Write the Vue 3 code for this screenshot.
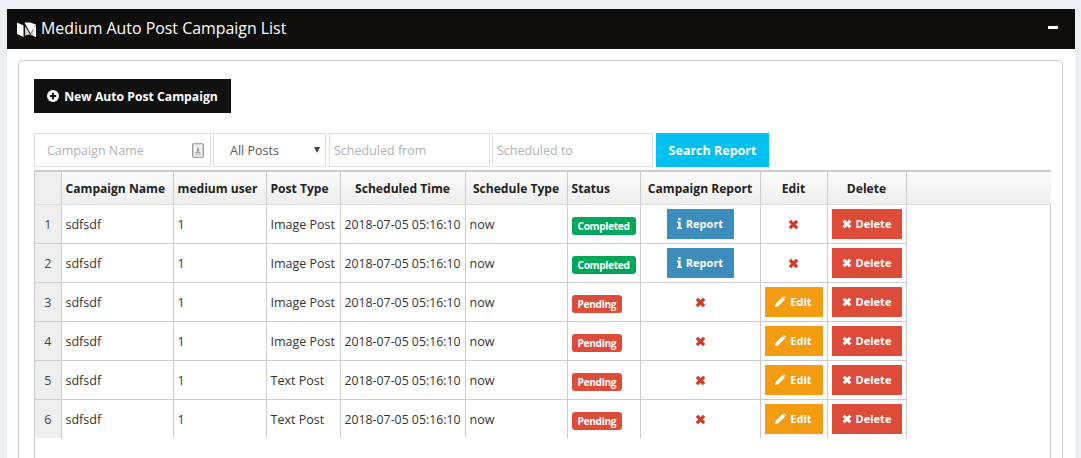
<template>
  <div class="page">
    <div class="box">
      <header class="box-head">
        <h1 class="box-title">
          <svg class="logo" viewBox="0 0 19 15" width="19" height="15">
            <path d="M0 0.5 6.5 3.5V15L0 12z" fill="#fff" />
            <path d="M7.5 0.5H13L19 2.5 13.5 11.5z" fill="#fff" />
            <path d="M8 4 13.2 12.6 19 3.6V15L13 12.4 8 13.4z" fill="#c9c9c9" />
            <path d="M16.5 6.5 19 3.6V15L16.5 13.8z" fill="#fff" />
          </svg>
          Medium Auto Post Campaign List
        </h1>
        <span class="collapse"></span>
      </header>
      <div class="box-body">
        <div class="panel">
          <button class="btn btn-new">
            <svg viewBox="0 0 12 12" width="12" height="12">
              <circle cx="6" cy="6" r="6" fill="#fff" />
              <path d="M6 2.8v6.4M2.8 6h6.4" stroke="#111" stroke-width="2" />
            </svg>
            New Auto Post Campaign
          </button>
          <div class="filters">
            <div class="field field-name">
              <span class="placeholder">Campaign Name</span>
              <svg class="contact" viewBox="0 0 12 15" width="12" height="15">
                <rect x="0.75" y="0.75" width="10.5" height="13.5" rx="1" fill="#f4f4f4" stroke="#8d8d8d" stroke-width="1.2" />
                <path d="M6 3 7.4 8.4H4.6z" fill="#8d8d8d" />
                <rect x="3.4" y="8.8" width="5.2" height="1.6" fill="#a5a5a5" />
                <rect x="3" y="11.2" width="6" height="1" fill="#bbb" />
              </svg>
            </div>
            <div class="field field-select">
              <span>All Posts</span>
              <i class="caret"></i>
            </div>
            <div class="field field-date"><span class="placeholder">Scheduled from</span></div>
            <div class="field field-date"><span class="placeholder">Scheduled to</span></div>
            <button class="btn btn-search">Search Report</button>
          </div>
          <div class="grid">
            <table>
              <colgroup>
                <col v-for="w in widths" :key="w.id" :style="{ width: w.px + 'px' }" />
              </colgroup>
              <thead>
                <tr>
                  <th class="idx"></th>
                  <th>Campaign Name</th>
                  <th>medium user</th>
                  <th>Post Type</th>
                  <th class="center">Scheduled Time</th>
                  <th class="center">Schedule Type</th>
                  <th>Status</th>
                  <th class="center">Campaign Report</th>
                  <th class="center">Edit</th>
                  <th class="center">Delete</th>
                  <th></th>
                </tr>
              </thead>
              <tbody>
                <tr v-for="(row, i) in rows" :key="i">
                  <td class="idx">{{ i + 1 }}</td>
                  <td>sdfsdf</td>
                  <td>1</td>
                  <td>{{ row.type }}</td>
                  <td class="time">2018-07-05 05:16:10</td>
                  <td>now</td>
                  <td>
                    <span class="label" :class="row.done ? 'label-green' : 'label-red'">
                      {{ row.done ? 'Completed' : 'Pending' }}
                    </span>
                  </td>
                  <td class="center">
                    <button v-if="row.done" class="btn btn-sm btn-report">
                      <svg viewBox="0 0 5 11" width="5" height="11">
                        <path d="M1.2 0h2.4v2.2H1.2zM0.2 3.6h3.4v5.8H5V11H0V9.4h1.2V5.2H0.2z" fill="#fff" />
                      </svg>
                      Report
                    </button>
                    <svg v-else class="cross" viewBox="0 0 10 10" width="11" height="11">
                      <path d="M1.7 1.7l6.6 6.6M8.3 1.7 1.7 8.3" stroke="#d73925" stroke-width="3" />
                    </svg>
                  </td>
                  <td class="center">
                    <svg v-if="row.done" class="cross" viewBox="0 0 10 10" width="11" height="11">
                      <path d="M1.7 1.7l6.6 6.6M8.3 1.7 1.7 8.3" stroke="#d73925" stroke-width="3" />
                    </svg>
                    <button v-else class="btn btn-sm btn-edit">
                      <svg viewBox="0 0 11 11" width="11" height="11">
                        <path d="M0 11 0.8 7.8 7.6 1l2.4 2.4-6.8 6.8zM8.3.4 9 0l2 2-.5.7z" fill="#fff" />
                      </svg>
                      Edit
                    </button>
                  </td>
                  <td class="center">
                    <button class="btn btn-sm btn-delete">
                      <svg viewBox="0 0 10 10" width="10" height="10">
                        <path d="M1.7 1.7l6.6 6.6M8.3 1.7 1.7 8.3" stroke="#fff" stroke-width="3" />
                      </svg>
                      Delete
                    </button>
                  </td>
                  <td class="empty"></td>
                </tr>
              </tbody>
            </table>
          </div>
        </div>
      </div>
    </div>
  </div>
</template>

<script setup>
const widths = [26, 112, 93, 74, 125, 102, 73, 120, 67, 79, 145].map((px, id) => ({ id, px }))

const rows = [
  { type: 'Image Post', done: true },
  { type: 'Image Post', done: true },
  { type: 'Image Post', done: false },
  { type: 'Image Post', done: false },
  { type: 'Text Post', done: false },
  { type: 'Text Post', done: false }
]
</script>

<style>
html, body {
  margin: 0;
  height: 100%;
  overflow: hidden;
  background: #ecf0f5;
}
</style>

<style scoped>
.page {
  padding: 9px 6px 0 7px;
  font-family: "Open Sans", "Liberation Sans", sans-serif;
  font-size: 12.5px;
  color: #333;
}

.box {
  background: #fff;
  height: 449px;
  overflow: hidden;
}

.box-head {
  display: flex;
  align-items: center;
  justify-content: space-between;
  height: 40px;
  padding: 0 17px 0 10px;
  background: #0f0e0d;
  color: #fff;
}

.box-title {
  display: flex;
  align-items: center;
  gap: 5px;
  margin: 0 0 3px;
  font-size: 15.9px;
  font-weight: 400;
}

.logo {
  flex: none;
  margin-top: 3px;
}

.collapse {
  width: 10px;
  height: 3px;
  margin-bottom: 3px;
  background: #fff;
}

.box-body {
  padding: 11px 12px 0 11px;
}

.panel {
  height: 500px;
  padding: 18px 12px 0 15px;
  border: 1px solid #ccc;
  border-radius: 4px;
}

.btn {
  display: inline-flex;
  align-items: center;
  justify-content: center;
  border: 0;
  color: #fff;
  font-family: inherit;
  font-weight: 700;
  cursor: pointer;
}

.btn-new {
  gap: 5px;
  width: 197px;
  height: 34px;
  background: #111;
  font-size: 12.2px;
}

.filters {
  display: flex;
  margin-top: 20px;
  height: 34px;
}

.field {
  display: flex;
  align-items: center;
  box-sizing: border-box;
  height: 34px;
  border: 1px solid #ddd;
  color: #555;
  font-size: 12.5px;
}

.placeholder {
  color: #b0b0b0;
}

.field-name {
  justify-content: space-between;
  width: 177px;
  padding: 0 6px 0 12px;
  margin-right: 2px;
}

.field-select {
  justify-content: space-between;
  width: 113px;
  padding: 0 5px 0 16px;
  margin-right: 3px;
}

.caret {
  width: 0;
  height: 0;
  border-left: 3.5px solid transparent;
  border-right: 3.5px solid transparent;
  border-top: 6px solid #444;
}

.field-date {
  width: 161px;
  padding: 0 4px;
  margin-right: 2px;
}

.field-date + .field-date {
  margin-right: 3px;
}

.btn-search {
  width: 113px;
  height: 34px;
  background: #00c0ef;
  font-size: 12.5px;
}

.grid {
  box-sizing: border-box;
  width: 1017px;
  height: 300px;
  margin-top: 3px;
  border: 1px solid #ccc;
  border-width: 2px 1px 0;
}

table {
  width: 1016px;
  table-layout: fixed;
  border-collapse: collapse;
}

th {
  height: 32px;
  padding: 0 4px;
  background: linear-gradient(#fafafa, #eee);
  border-right: 1px solid #ccc;
  border-bottom: 1px solid #ddd;
  color: #222;
  font-size: 12.1px;
  font-weight: 700;
  text-align: left;
  white-space: nowrap;
}

td {
  height: 38px;
  padding: 0 4px;
  border-right: 1px solid #ccc;
  border-bottom: 1px solid #ccc;
  white-space: nowrap;
}

td.time {
  font-size: 12.3px;
}

tbody tr:last-child td {
  border-bottom: 0;
}

th:first-child,
td:first-child {
  border-left: 0;
}

th:last-child,
td:last-child {
  border-right: 0;
}

td.empty {
  border-bottom: 0;
}

.idx {
  background: #eee;
  text-align: center;
}

td.idx {
  color: #444;
}

.center {
  text-align: center;
}

.label {
  display: inline-block;
  margin-top: 4px;
  padding: 2px 6px;
  border-radius: 3px;
  color: #fff;
  font-size: 10.2px;
  font-weight: 700;
  letter-spacing: -0.35px;
  line-height: 14px;
  vertical-align: middle;
}

.label-green {
  background: #00a65a;
}

.label-red {
  background: #dd4b39;
}

.btn-sm {
  gap: 4px;
  height: 30px;
  padding-bottom: 2px;
  font-size: 11px;
  vertical-align: middle;
}

.btn-report {
  width: 67px;
  background: #3c8dbc;
}

.btn-edit {
  width: 58px;
  background: #f39c12;
}

.btn-delete {
  width: 70px;
  background: #dd4b39;
}

.cross {
  margin-bottom: 2px;
  vertical-align: middle;
}
</style>
